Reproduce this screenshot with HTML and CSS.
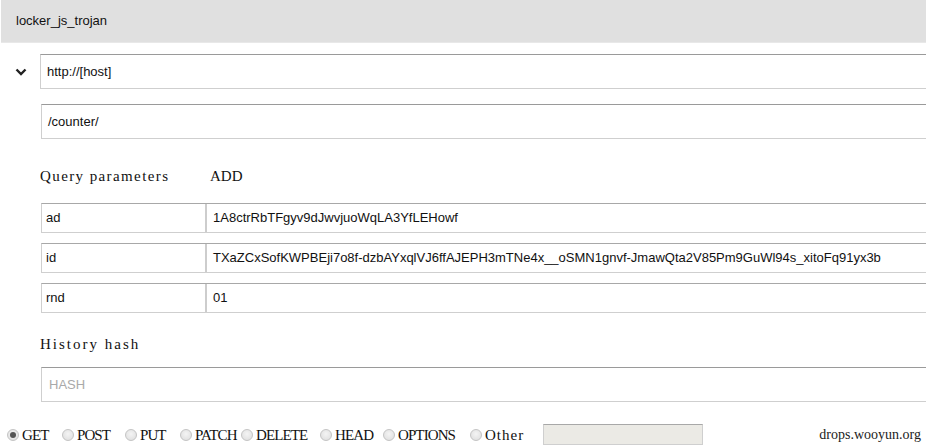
FILE: index.html
```html
<!DOCTYPE html>
<html>
<head>
<meta charset="utf-8">
<title>locker_js_trojan</title>
<link rel="stylesheet" href="styles.css">
</head>
<body>
<div class="header">locker_js_trojan</div>

<div class="request">
  <div class="url-row">
    <span class="toggle">
      <svg width="12" height="8" viewBox="0 0 12 8"><path d="M1.5 1.5 L6 6 L10.5 1.5" fill="none" stroke="#222" stroke-width="2.4"/></svg>
    </span>
    <div class="field field-url">http://[host]</div>
  </div>
  <div class="field field-path">/counter/</div>

  <div class="section-title">
    <span class="title-text">Query parameters</span>
    <span class="add">ADD</span>
  </div>

  <div class="params">
    <div class="param"><div class="key">ad</div><div class="value">1A8ctrRbTFgyv9dJwvjuoWqLA3YfLEHowf</div></div>
    <div class="param"><div class="key">id</div><div class="value">TXaZCxSofKWPBEji7o8f-dzbAYxqlVJ6ffAJEPH3mTNe4x__oSMN1gnvf-JmawQta2V85Pm9GuWl94s_xitoFq91yx3b</div></div>
    <div class="param"><div class="key">rnd</div><div class="value">01</div></div>
  </div>

  <div class="section-title hash-title"><span class="title-text">History hash</span></div>
  <div class="field field-hash placeholder">HASH</div>
</div>

<div class="methods">
  <label class="method m-get"><span class="radio checked"></span>GET</label>
  <label class="method m-post"><span class="radio"></span>POST</label>
  <label class="method m-put"><span class="radio"></span>PUT</label>
  <label class="method m-patch"><span class="radio"></span>PATCH</label>
  <label class="method m-delete"><span class="radio"></span>DELETE</label>
  <label class="method m-head"><span class="radio"></span>HEAD</label>
  <label class="method m-options"><span class="radio"></span>OPTIONS</label>
  <label class="method m-other"><span class="radio"></span>Other</label>
  <span class="other-box"></span>
  <span class="site">drops.wooyun.org</span>
</div>
</body>
</html>
```
FILE: styles.css
```css
html, body {
  margin: 0;
  padding: 0;
  overflow: hidden;
  background: #fff;
}

body {
  font-family: "Liberation Sans", Arial, sans-serif;
  font-size: 13px;
  color: #111;
  width: 926px;
}

.header {
  margin-left: 1px;
  height: 43px;
  line-height: 41px;
  padding-left: 15px;
  background: #e0e0e0;
  border-bottom: 1px solid #e8e8e8;
  box-sizing: border-box;
}

.request {
  display: flex;
  flex-direction: column;
  padding-top: 11px;
}

.url-row {
  display: flex;
  align-items: center;
}

.toggle {
  width: 40px;
  flex: 0 0 40px;
  display: flex;
  justify-content: center;
  padding-left: 1px;
  box-sizing: border-box;
}

.field {
  box-sizing: border-box;
  flex-shrink: 0;
  height: 35px;
  line-height: 33px;
  width: 1000px;
  padding-left: 6px;
  border: 1px solid #cfcfcf;
  border-top-color: #9a9a9a;
  background: #fff;
}

.field-path {
  margin-left: 41px;
  margin-top: 15px;
}

/* section captions use a serif face, like the method labels */
.section-title {
  display: flex;
  margin-left: 40px;
  margin-top: 28px;
  height: 18px;
  line-height: 18px;
  font-family: "Liberation Serif", "Times New Roman", serif;
  font-size: 15px;
  letter-spacing: 1.4px;
  color: #111;
}

.section-title .title-text {
  width: 170px;
}

.hash-title .title-text {
  letter-spacing: 2px;
}

.section-title .add {
  letter-spacing: 0;
}

.params {
  display: flex;
  flex-direction: column;
  gap: 10px;
  margin-left: 41px;
  margin-top: 18px;
}

.param {
  display: flex;
  flex-shrink: 0;
  height: 30px;
  width: 1000px;
  box-sizing: border-box;
  border: 1px solid #cfcfcf;
  border-top-color: #a8a8a8;
  line-height: 28px;
}

.key {
  width: 165px;
  flex: 0 0 165px;
  padding-left: 4px;
  box-sizing: border-box;
  border-right: 2px solid #cdcdcd;
}

.value {
  padding-left: 6px;
  white-space: nowrap;
}

.hash-title {
  margin-top: 22px;
}

.field-hash {
  margin-left: 41px;
  margin-top: 14px;
  padding-left: 7px;
}

.placeholder {
  color: #a9a9a9;
}

.methods {
  display: flex;
  align-items: center;
  height: 24px;
  margin-top: 21px;
  padding-left: 7px;
  font-family: "Liberation Serif", "Times New Roman", serif;
  font-size: 15px;
  letter-spacing: -0.9px;
  color: #111;
}

.method {
  display: flex;
  align-items: center;
  flex-shrink: 0;
  white-space: nowrap;
}

.m-get { width: 55px; }
.m-post { width: 63px; }
.m-put { width: 55px; }
.m-patch { width: 61px; }
.m-delete { width: 79px; }
.m-head { width: 63px; }
.m-options { width: 87px; }
.m-other { width: 73px; letter-spacing: 1px; }

.radio {
  width: 12px;
  height: 12px;
  flex: 0 0 12px;
  box-sizing: border-box;
  border-radius: 50%;
  border: 1px solid #c4c4c4;
  background: radial-gradient(circle at 50% 40%, #f4f4f4 0, #dcdcdc 100%);
  margin-right: 3px;
  position: relative;
}

.radio.checked::after {
  content: "";
  position: absolute;
  left: 2px;
  top: 2px;
  width: 6px;
  height: 6px;
  border-radius: 50%;
  background: #555;
}

.other-box {
  width: 160px;
  height: 21px;
  flex-shrink: 0;
  box-sizing: border-box;
  background: #ebeae5;
  border: 1px solid #cfcfcf;
  border-top-color: #a8a8a8;
  margin-top: -2px;
}

.site {
  margin-left: auto;
  margin-right: 5px;
  font-family: "Liberation Serif", "Times New Roman", serif;
  font-size: 14px;
  letter-spacing: 0;
  color: #222;
}
```
